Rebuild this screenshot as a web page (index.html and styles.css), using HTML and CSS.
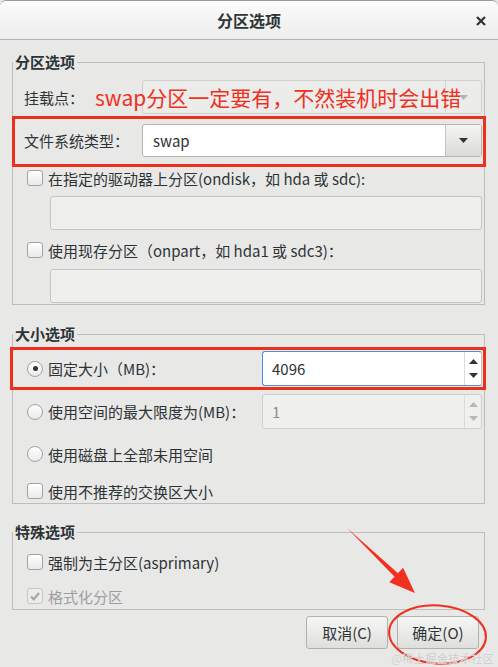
FILE: index.html
```html
<!DOCTYPE html>
<html lang="zh-CN">
<head>
    <meta charset="UTF-8">
    <title>分区选项</title>
    <link rel="stylesheet" href="styles.css">
</head>
<body>
    <div class="dialog">
        <!-- Title bar -->
        <div class="titlebar">
            <span class="title">分区选项</span>
            <svg class="close" width="10" height="10" viewBox="0 0 10 10"><path d="M1 1l8 8M9 1l-8 8" stroke="#2e3436" stroke-width="2.2"/></svg>
        </div>

        <div class="content">
            <!-- Partition options -->
            <fieldset class="group">
                <legend>分区选项</legend>
                <div class="group-inner part-inner">
                    <div class="row">
                        <span class="field-label">挂载点：</span>
                        <div class="combo combo-disabled">
                            <span class="combo-text"></span>
                            <span class="combo-btn">
                                <svg width="9" height="5" viewBox="0 0 9 5"><path d="M0 0h9L4.5 5z" fill="#b4b4b4"/></svg>
                            </span>
                        </div>
                        <span class="note">swap分区一定要有，不然装机时会出错</span>
                    </div>
                    <div class="row row-fs marked">
                        <span class="field-label">文件系统类型：</span>
                        <div class="combo">
                            <span class="combo-text">swap</span>
                            <span class="combo-btn">
                                <svg width="9" height="5" viewBox="0 0 9 5"><path d="M0 0h9L4.5 5z" fill="#2e3436"/></svg>
                            </span>
                        </div>
                    </div>
                    <div class="check-row first-check">
                        <span class="check"></span>
                        <span>在指定的驱动器上分区(ondisk，如 hda 或 sdc):</span>
                    </div>
                    <div class="entry"></div>
                    <div class="check-row second-check">
                        <span class="check"></span>
                        <span>使用现存分区（onpart，如 hda1 或 sdc3)：</span>
                    </div>
                    <div class="entry"></div>
                </div>
            </fieldset>

            <!-- Size options -->
            <fieldset class="group size-group">
                <legend>大小选项</legend>
                <div class="group-inner size-inner">
                    <div class="row spin-row marked marked-spin">
                        <div class="check-row">
                            <span class="radio checked"></span>
                            <span>固定大小（MB)：</span>
                        </div>
                        <div class="spin focused">
                            <span class="spin-text">4096</span>
                            <span class="spin-btns">
                                <svg width="9" height="5" viewBox="0 0 9 5"><path d="M0 5h9L4.5 0z" fill="#2e3436"/></svg>
                                <svg width="9" height="5" viewBox="0 0 9 5"><path d="M0 0h9L4.5 5z" fill="#2e3436"/></svg>
                            </span>
                        </div>
                    </div>
                    <div class="row spin-row second-spin">
                        <div class="check-row">
                            <span class="radio"></span>
                            <span>使用空间的最大限度为(MB)：</span>
                        </div>
                        <div class="spin spin-disabled">
                            <span class="spin-text">1</span>
                            <span class="spin-btns">
                                <svg width="9" height="5" viewBox="0 0 9 5"><path d="M0 5h9L4.5 0z" fill="#b8b8b8"/></svg>
                                <svg width="9" height="5" viewBox="0 0 9 5"><path d="M0 0h9L4.5 5z" fill="#b8b8b8"/></svg>
                            </span>
                        </div>
                    </div>
                    <div class="check-row third-radio">
                        <span class="radio"></span>
                        <span>使用磁盘上全部未用空间</span>
                    </div>
                    <div class="check-row swap-check">
                        <span class="check"></span>
                        <span>使用不推荐的交换区大小</span>
                    </div>
                </div>
            </fieldset>

            <!-- Special options -->
            <fieldset class="group special-group">
                <legend>特殊选项</legend>
                <div class="group-inner special-inner">
                    <div class="check-row">
                        <span class="check"></span>
                        <span>强制为主分区(asprimary)</span>
                    </div>
                    <div class="check-row disabled format-check">
                        <span class="check check-disabled">
                            <svg width="12" height="12" viewBox="0 0 12 12"><path d="M2 6.5l2.8 2.8L10 3" fill="none" stroke="#a8a8a8" stroke-width="2.2"/></svg>
                        </span>
                        <span>格式化分区</span>
                    </div>
                </div>
            </fieldset>

            <div class="buttons">
                <button type="button">取消(C)</button>
                <button type="button">确定(O)</button>
            </div>
        </div>

        <!-- Annotations drawn over the screenshot -->
        <svg class="marks" width="498" height="667" viewBox="0 0 498 667">
            <g transform="translate(347 528) rotate(43.7)">
                <path d="M0 0L72 -2.6L72 2.6Z" fill="#f2301f"/>
                <path d="M68 -10L94 0L68 10Z" fill="#f2301f"/>
            </g>
            <ellipse cx="437.5" cy="634.5" rx="48.5" ry="29" fill="none" stroke="#f0301f" stroke-width="2" transform="rotate(4 437.5 634.5)"/>
        </svg>
        <div class="watermark">@稀土掘金技术社区</div>
    </div>
</body>
</html>
```

FILE: styles.css
```css
body {
    margin: 0;
    font-family: "Noto Sans CJK SC", "Noto Sans", sans-serif;
    background-color: #e8e8e7;
    color: #2e3436;
}

.dialog {
    position: relative;
    width: 498px;
    height: 667px;
    overflow: hidden;
    background-color: #e8e8e7;
}

/* Title bar */
.titlebar {
    height: 38px;
    border-top: 1px solid #9a9a9a;
    border-bottom: 1px solid #b2b2b2;
    border-radius: 6px 6px 0 0;
    background: linear-gradient(#fbfbfb, #ededed);
    display: flex;
    align-items: center;
    justify-content: center;
    position: relative;
}

.titlebar .title {
    font-size: 16px;
    font-weight: bold;
    color: #2e3436;
}

.titlebar .close {
    position: absolute;
    right: 12px;
    top: 15px;
}

/* Groups */
.content {
    padding: 0 13px 0 12px;
}

.group {
    margin: 12px 0 0;
    padding: 0;
    border: 1px solid #bdbdbd;
    min-width: 0;
}

.group legend {
    padding: 0 2px;
    font-size: 15px;
    font-weight: bold;
    line-height: 20px;
}

.size-group {
    margin-top: 19px;
}

.special-group {
    margin-top: 18px;
}

.group-inner {
    padding: 0 2px 0 11px;
    font-size: 15px;
}

.part-inner {
    padding-top: 8px;
    padding-bottom: 1px;
}

.size-inner {
    padding-top: 7px;
    padding-bottom: 1px;
}

.special-inner {
    padding-top: 9px;
    padding-bottom: 2px;
}

.row {
    display: flex;
    align-items: center;
    position: relative;
}

.row-fs {
    margin-top: 10px;
}

.field-label {
    width: 118px;
    flex-shrink: 0;
}

.marked::before {
    content: "";
    position: absolute;
    top: -8px;
    bottom: -10px;
    left: -12px;
    right: -4px;
    border: 3px solid #ee2f1d;
    pointer-events: none;
    z-index: 2;
}

.marked-spin::before {
    top: -4px;
    bottom: -4px;
    left: -14px;
    right: -4px;
}

.note {
    position: absolute;
    left: 71px;
    top: 3px;
    font-size: 21px;
    line-height: 28px;
    color: #f0301e;
    white-space: nowrap;
    z-index: 2;
}

/* Combo boxes */
.combo {
    flex: 1;
    height: 34px;
    box-sizing: border-box;
    border: 1px solid #b6b6b3;
    border-radius: 3px;
    background-color: #ffffff;
    display: flex;
    overflow: hidden;
}

.row-fs .combo {
    height: 33px;
}

.combo-text {
    flex: 1;
    padding-left: 10px;
    line-height: 31px;
    font-size: 15px;
}

.combo-btn {
    width: 35px;
    border-left: 1px solid #c4c4c2;
    background: linear-gradient(#f4f4f3, #dadad8);
    display: flex;
    align-items: center;
    justify-content: center;
}

.combo-disabled {
    border-color: #cfcfcd;
    background-color: #ececeb;
}

.combo-disabled .combo-btn {
    border-left-color: #d2d2d0;
    background: #ececeb;
}

/* Check boxes and radios */
.check-row {
    display: flex;
    align-items: center;
    height: 22px;
    padding-left: 3px;
    white-space: nowrap;
}

.check,
.radio {
    width: 14px;
    height: 14px;
    margin-right: 5px;
    border: 1px solid #a2a2a0;
    background: linear-gradient(#ffffff, #eaeaea);
    flex-shrink: 0;
    display: flex;
    align-items: center;
    justify-content: center;
}

.check {
    border-radius: 3px;
}

.radio {
    border-radius: 50%;
}

.radio.checked::after {
    content: "";
    width: 5px;
    height: 5px;
    border-radius: 50%;
    background-color: #2e3436;
}

.first-check {
    margin-top: 10px;
}

.second-check {
    margin-top: 9px;
}

.entry {
    height: 34px;
    box-sizing: border-box;
    margin: 7px 0 0 26px;
    border: 1px solid #c4c4c2;
    border-radius: 3px;
    background-color: #efefee;
}

.second-check + .entry {
    margin-top: 8px;
}

.disabled {
    color: #9c9e9f;
}

.check-disabled {
    border-color: #c6c6c4;
    background: #ececeb;
}

.format-check {
    margin-top: 12px;
}

/* Spin buttons */
.spin-row .check-row {
    flex: 1;
}

.spin {
    width: 220px;
    height: 35px;
    box-sizing: border-box;
    border: 1px solid #b6b6b3;
    border-radius: 3px;
    background-color: #ffffff;
    display: flex;
    overflow: hidden;
}

.spin.focused {
    border-color: #4a90d9;
    border-right-color: #c4c4c2;
}

.spin-text {
    flex: 1;
    padding-left: 9px;
    line-height: 33px;
    font-size: 15px;
}

.spin-btns {
    width: 16px;
    border-left: 1px solid #dcdcda;
    display: flex;
    flex-direction: column;
    align-items: center;
    justify-content: space-around;
    padding: 3px 0;
}

.spin-disabled {
    border-color: #cfcfcd;
    background-color: #f0f0ef;
    color: #8b8e8f;
}

.second-spin {
    margin-top: 8px;
}

.third-radio {
    margin-top: 14px;
}

.swap-check {
    margin-top: 15px;
}

/* Buttons */
.buttons {
    display: flex;
    justify-content: flex-end;
    gap: 9px;
    margin-top: 6px;
    padding-right: 6px;
}

.buttons button {
    width: 82px;
    height: 33px;
    border: 1px solid #b0b0ae;
    border-radius: 3px;
    background: linear-gradient(#f6f6f5, #dededc);
    font-family: "Noto Sans CJK SC", "Noto Sans", sans-serif;
    font-size: 15px;
    color: #2e3436;
    padding: 0;
}

/* Annotations */
.marks {
    position: absolute;
    top: 0;
    left: 0;
    pointer-events: none;
}

.watermark {
    position: absolute;
    right: 4px;
    bottom: 1px;
    font-size: 11.5px;
    line-height: 16px;
    color: #c9c9c9;
    text-shadow: 0 0 1px #ffffff;
}
```
